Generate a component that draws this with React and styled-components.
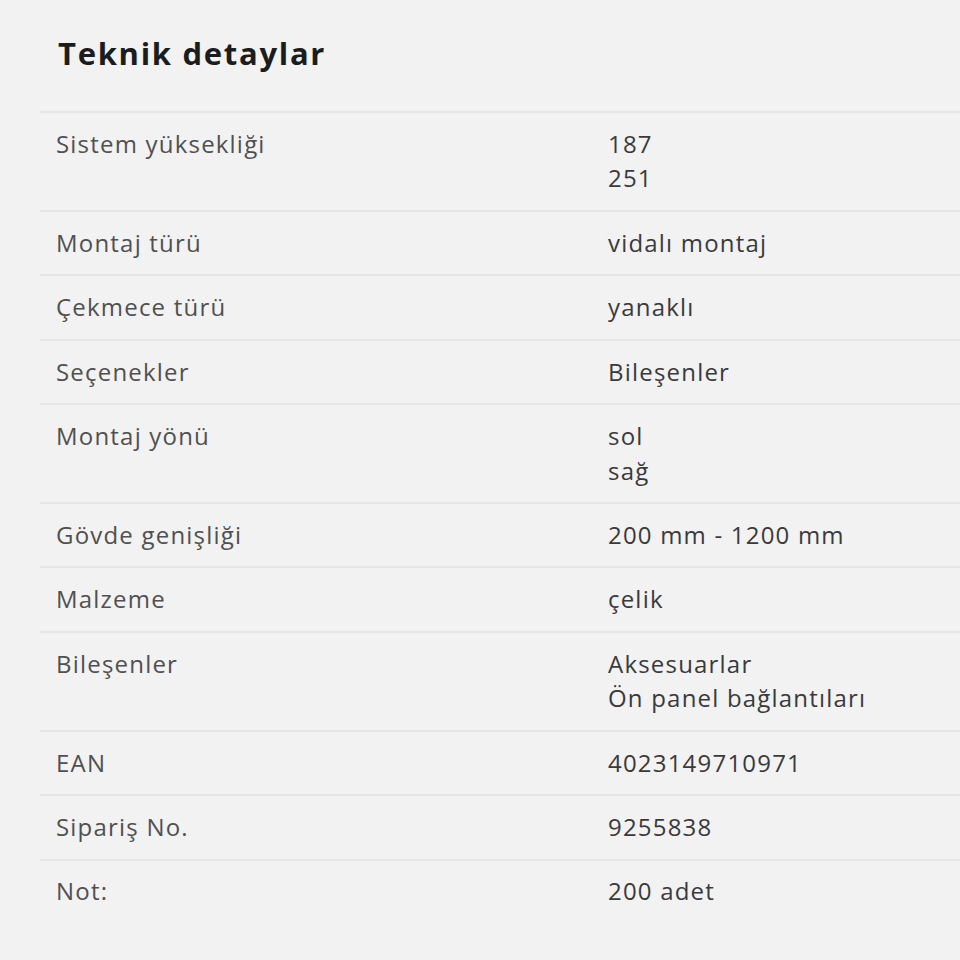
import React from 'react';
import styled, {createGlobalStyle} from 'styled-components';

const GlobalStyle = createGlobalStyle`
html, body {
  margin: 0;
  padding: 0;
  background: #f2f2f2;
}
body {
  font-family: "Open Sans", "Liberation Sans", sans-serif;
}
`;

const Section = styled.section`
width: 960px;
height: 960px;
padding-left: 40px;
box-sizing: border-box;
overflow: hidden;
`;

const Title = styled.h2`
margin: 0;
height: 111px;
box-sizing: border-box;
padding: 33px 0 0 18px;
font-size: 31px;
line-height: 40px;
letter-spacing: 1.7px;
font-weight: 700;
color: #1c1c1c;
`;

const Table = styled.div`
display: flex;
flex-direction: column;
`;

const Row = styled.div`
display: grid;
grid-template-columns: 552px 1fr;
border-top: 2px solid #e6e6e6;
padding: 13.9px 0;
`;

const Cell = styled.div`
padding-left: 16px;
font-size: 24px;
font-weight: 500;
line-height: 34.6px;
letter-spacing: 1.2px;
color: ${props => props.value ? '#3a3a3a' : '#505050'};
`;

const rows = [
  {label: 'Sistem yüksekliği', values: ['187', '251']},
  {label: 'Montaj türü', values: ['vidalı montaj']},
  {label: 'Çekmece türü', values: ['yanaklı']},
  {label: 'Seçenekler', values: ['Bileşenler']},
  {label: 'Montaj yönü', values: ['sol', 'sağ']},
  {label: 'Gövde genişliği', values: ['200 mm - 1200 mm']},
  {label: 'Malzeme', values: ['çelik']},
  {label: 'Bileşenler', values: ['Aksesuarlar', 'Ön panel bağlantıları']},
  {label: 'EAN', values: ['4023149710971']},
  {label: 'Sipariş No.', values: ['9255838']},
  {label: 'Not:', values: ['200 adet']}
];

export default function App() {
  return (
    <Section>
      <GlobalStyle/>
      <Title>Teknik detaylar</Title>
      <Table>
        {rows.map(row => (
          <Row key={row.label}>
            <Cell>{row.label}</Cell>
            <Cell value>
              {row.values.map(v => <div key={v}>{v}</div>)}
            </Cell>
          </Row>
        ))}
      </Table>
    </Section>
  );
}
